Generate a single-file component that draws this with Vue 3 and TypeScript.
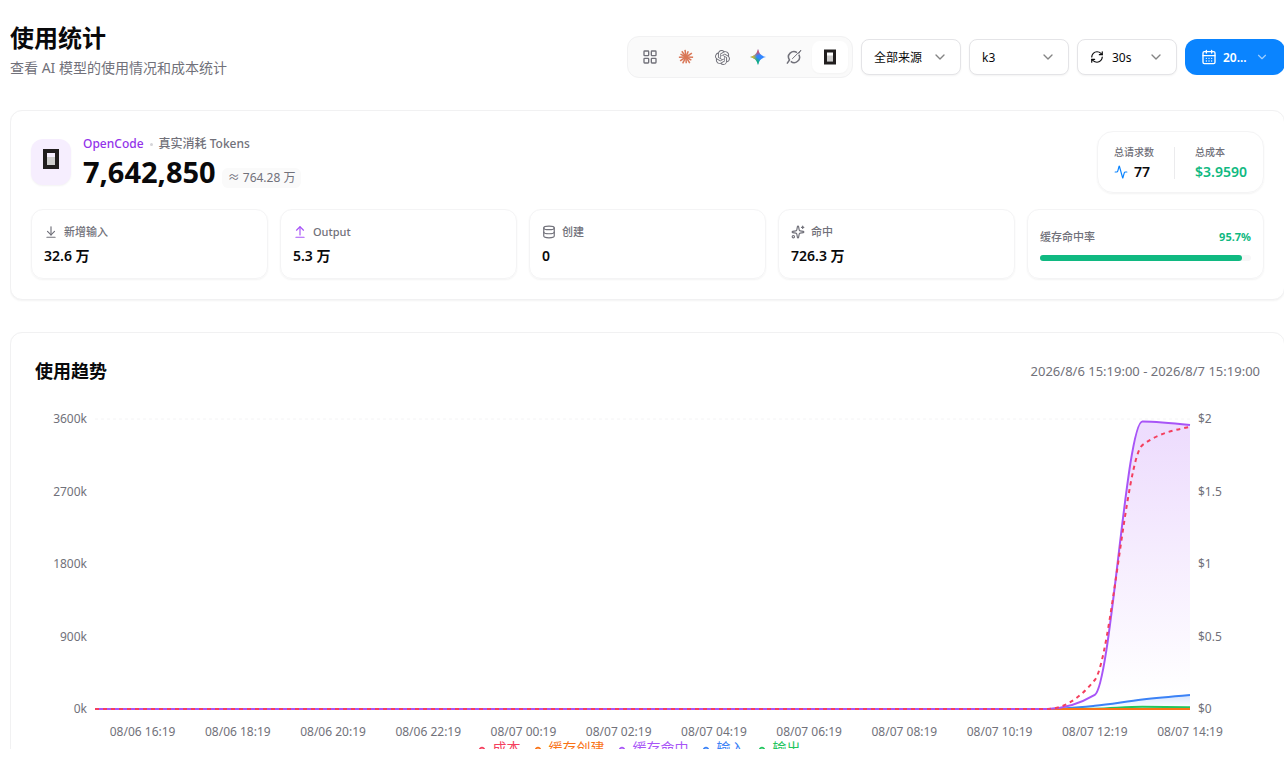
<script setup lang="ts">
import { computed, ref } from 'vue'

interface Point { x: number; y: number }
interface Series { name: string; color: string; values: number[]; key: string }
interface Stat { label: string; value: string; icon: string }

const provider = ref('opencode')
const source = ref('all')
const model = ref('k3')
const interval = ref('30')

const providers = [
  { id: 'all', label: '全部' },
  { id: 'claude', label: 'Claude' },
  { id: 'openai', label: 'OpenAI' },
  { id: 'gemini', label: 'Gemini' },
  { id: 'grok', label: 'Grok' },
  { id: 'opencode', label: 'OpenCode' },
]

const stats: Stat[] = [
  { label: '新增输入', value: '32.6 万', icon: 'down' },
  { label: 'Output', value: '5.3 万', icon: 'up' },
  { label: '创建', value: '0', icon: 'database' },
  { label: '命中', value: '726.3 万', icon: 'sparkles' },
]

const hitRate = 95.7

const plot = { left: 60, right: 1155, top: 10, bottom: 300 }
const tokenMax = 3600
const costMax = 2
const idle = Array<number>(21).fill(0)

const creation: Series = { key: 'creation', name: '缓存创建', color: '#f97316', values: [...idle, 0, 0, 0] }
const hits: Series = { key: 'hits', name: '缓存命中', color: '#a855f7', values: [...idle, 174, 3570, 3525] }
const input: Series = { key: 'input', name: '输入', color: '#3b82f6', values: [...idle, 40, 118, 174] }
const output: Series = { key: 'output', name: '输出', color: '#22c55e', values: [...idle, 4, 27, 22] }
const cost: Series = { key: 'cost', name: '成本', color: '#f43f5e', values: [...idle, 0.2, 1.82, 1.945] }

const areas = [input, output, creation, hits]
const legend = [cost, creation, hits, input, output]

function toPoints(values: number[], max: number): Point[] {
  const step = (plot.right - plot.left) / (values.length - 1)
  return values.map((v, i) => ({
    x: plot.left + i * step,
    y: plot.bottom - (v / max) * (plot.bottom - plot.top),
  }))
}

// Monotone cubic interpolation, so curves never overshoot their samples.
function monotone(p: Point[]): string {
  const n = p.length
  const slope = (i: number) => (p[i + 1].y - p[i].y) / (p[i + 1].x - p[i].x)
  const t: number[] = []
  for (let i = 1; i < n - 1; i++) {
    const a = slope(i - 1)
    const b = slope(i)
    const m = (a + b) / 2
    t[i] = (Math.sign(a) + Math.sign(b)) * Math.min(Math.abs(a), Math.abs(b), 0.5 * Math.abs(m))
  }
  t[0] = (3 * slope(0) - t[1]) / 2
  t[n - 1] = (3 * slope(n - 2) - t[n - 2]) / 2
  let d = `M${p[0].x},${p[0].y}`
  for (let i = 0; i < n - 1; i++) {
    const dx = (p[i + 1].x - p[i].x) / 3
    d += `C${p[i].x + dx},${p[i].y + dx * t[i]},${p[i + 1].x - dx},${p[i + 1].y - dx * t[i + 1]},${p[i + 1].x},${p[i + 1].y}`
  }
  return d
}

const areaPaths = computed(() =>
  areas.map((s) => {
    const line = monotone(toPoints(s.values, tokenMax))
    return { ...s, line, fill: `${line}L${plot.right},${plot.bottom}L${plot.left},${plot.bottom}Z` }
  }),
)
const costPath = computed(() => monotone(toPoints(cost.values, costMax)))

const yTicks = ['3600k', '2700k', '1800k', '900k', '0k'].map((label, i) => ({ label, y: plot.top + i * 72.5 }))
const costTicks = ['$2', '$1.5', '$1', '$0.5', '$0'].map((label, i) => ({ label, y: plot.top + i * 72.5 }))
const xTicks = [
  '08/06 16:19', '08/06 18:19', '08/06 20:19', '08/06 22:19', '08/07 00:19', '08/07 02:19',
  '08/07 04:19', '08/07 06:19', '08/07 08:19', '08/07 10:19', '08/07 12:19', '08/07 14:19',
].map((label, i) => ({ label, x: plot.left + ((2 * i + 1) * (plot.right - plot.left)) / 23 }))

const rays = [
  [2, 8], [31, 7], [58, 8], [88, 7], [118, 8], [146, 8], [178, 8], [207, 7], [234, 8], [262, 8], [291, 7], [326, 8],
].map(([deg, r]) => {
  const a = (deg * Math.PI) / 180
  return { x: 9 + r * Math.cos(a), y: 9 + r * Math.sin(a) }
})
</script>

<template>
  <div class="page">
    <main class="content">
      <header class="top">
        <div class="heading">
          <h1>使用统计</h1>
          <p>查看 AI 模型的使用情况和成本统计</p>
        </div>
        <div class="controls">
          <div class="providers" role="group" aria-label="应用">
            <button
              v-for="p in providers"
              :key="p.id"
              type="button"
              :class="{ active: provider === p.id }"
              :aria-label="p.label"
              :aria-pressed="provider === p.id"
              @click="provider = p.id"
            >
              <svg v-if="p.id === 'all'" width="16" height="16" viewBox="0 0 24 24" fill="none" stroke="#71717a" stroke-width="2">
                <rect x="3" y="3" width="7" height="7" rx="1" /><rect x="14" y="3" width="7" height="7" rx="1" />
                <rect x="3" y="14" width="7" height="7" rx="1" /><rect x="14" y="14" width="7" height="7" rx="1" />
              </svg>
              <svg v-else-if="p.id === 'claude'" width="16" height="16" viewBox="0 0 18 18" stroke="#d97757" stroke-width="1.7">
                <line v-for="(r, i) in rays" :key="i" x1="9" y1="9" :x2="r.x" :y2="r.y" />
              </svg>
              <svg v-else-if="p.id === 'openai'" width="15" height="15" viewBox="0 0 24 24" fill="#71717a">
                <path d="M22.2819 9.8211a5.9847 5.9847 0 0 0-.5157-4.9108 6.0462 6.0462 0 0 0-6.5098-2.9A6.0651 6.0651 0 0 0 4.9807 4.1818a5.9847 5.9847 0 0 0-3.9977 2.9 6.0462 6.0462 0 0 0 .7427 7.0966 5.98 5.98 0 0 0 .511 4.9107 6.051 6.051 0 0 0 6.5146 2.9001A5.9847 5.9847 0 0 0 13.2599 24a6.0557 6.0557 0 0 0 5.7718-4.2058 5.9894 5.9894 0 0 0 3.9977-2.9001 6.0557 6.0557 0 0 0-.7475-7.0729zm-9.022 12.6081a4.4755 4.4755 0 0 1-2.8764-1.0408l.1419-.0804 4.7783-2.7582a.7948.7948 0 0 0 .3927-.6813v-6.7369l2.02 1.1686a.071.071 0 0 1 .038.052v5.5826a4.504 4.504 0 0 1-4.4945 4.4944zm-9.6607-4.1254a4.4708 4.4708 0 0 1-.5346-3.0137l.142.0852 4.783 2.7582a.7712.7712 0 0 0 .7806 0l5.8428-3.3685v2.3324a.0804.0804 0 0 1-.0332.0615L9.74 19.9502a4.4992 4.4992 0 0 1-6.1408-1.6464zM2.3408 7.8956a4.485 4.485 0 0 1 2.3655-1.9728V11.6a.7664.7664 0 0 0 .3879.6765l5.8144 3.3543-2.0201 1.1685a.0757.0757 0 0 1-.071 0l-4.8303-2.7865A4.504 4.504 0 0 1 2.3408 7.872zm16.5963 3.8558L13.1038 8.364 15.1192 7.2a.0757.0757 0 0 1 .071 0l4.8303 2.7913a4.4944 4.4944 0 0 1-.6765 8.1042v-5.6772a.79.79 0 0 0-.407-.667zm2.0107-3.0231l-.142-.0852-4.7735-2.7818a.7759.7759 0 0 0-.7854 0L9.409 9.2297V6.8974a.0662.0662 0 0 1 .0284-.0615l4.8303-2.7866a4.4992 4.4992 0 0 1 6.6802 4.66zM8.3065 12.863l-2.02-1.1638a.0804.0804 0 0 1-.038-.0567V6.0742a4.4992 4.4992 0 0 1 7.3757-3.4537l-.142.0805L8.704 5.459a.7948.7948 0 0 0-.3927.6813zm1.0976-2.3654l2.602-1.4998 2.6069 1.4998v2.9994l-2.5974 1.4997-2.6067-1.4997Z" />
              </svg>
              <svg v-else-if="p.id === 'gemini'" width="16" height="16" viewBox="0 0 24 24">
                <defs>
                  <linearGradient id="gem-red" x1="11" y1="0" x2="13" y2="10" gradientUnits="userSpaceOnUse">
                    <stop offset="0.3" stop-color="#f94543" /><stop offset="1" stop-color="#f94543" stop-opacity="0" />
                  </linearGradient>
                  <linearGradient id="gem-yellow" x1="0" y1="12" x2="11" y2="12" gradientUnits="userSpaceOnUse">
                    <stop offset="0.3" stop-color="#fabc12" /><stop offset="0.95" stop-color="#fabc12" stop-opacity="0" />
                  </linearGradient>
                  <linearGradient id="gem-green" x1="9" y1="22" x2="14" y2="14" gradientUnits="userSpaceOnUse">
                    <stop offset="0.3" stop-color="#08b962" /><stop offset="1" stop-color="#08b962" stop-opacity="0" />
                  </linearGradient>
                </defs>
                <path
                  v-for="f in ['#3186ff', 'url(#gem-green)', 'url(#gem-red)', 'url(#gem-yellow)']"
                  :key="f"
                  :fill="f"
                  d="M12 0C13 6.5 17.5 11 24 12C17.5 13 13 17.5 12 24C11 17.5 6.5 13 0 12C6.5 11 11 6.5 12 0Z"
                />
              </svg>
              <svg v-else-if="p.id === 'grok'" width="16" height="16" viewBox="0 0 16 16" fill="none" stroke="#71717a" stroke-width="1.5">
                <path d="M11 3.7A5.3 5.3 0 0 0 3.5 11L1 14.6" />
                <path d="M4.8 12.3A5.3 5.3 0 0 0 12.8 5.6" />
                <path d="M6.2 9.9L15 1.2L12.6 4.8" stroke-width="1" />
              </svg>
              <svg v-else width="18" height="18" viewBox="0 0 24 24">
                <path fill="#cfcecd" d="M8 10h8v8H8z" />
                <path fill="#211e1e" d="M16 6H8v12h8V6zm4 16H4V2h16v20z" />
              </svg>
            </button>
          </div>

          <label class="select">
            <select v-model="source" aria-label="来源"><option value="all">全部来源</option></select>
            <svg class="chevron" width="16" height="16" viewBox="0 0 24 24"><path d="m6 9 6 6 6-6" /></svg>
          </label>
          <label class="select">
            <select v-model="model" aria-label="模型"><option value="k3">k3</option></select>
            <svg class="chevron" width="16" height="16" viewBox="0 0 24 24"><path d="m6 9 6 6 6-6" /></svg>
          </label>
          <label class="select">
            <svg class="refresh" width="14" height="14" viewBox="0 0 24 24">
              <path d="M3 12a9 9 0 0 1 9-9 9.75 9.75 0 0 1 6.74 2.74L21 8" /><path d="M21 3v5h-5" />
              <path d="M21 12a9 9 0 0 1-9 9 9.75 9.75 0 0 1-6.74-2.74L3 16" /><path d="M8 16H3v5" />
            </svg>
            <select v-model="interval" aria-label="刷新间隔"><option value="30">30s</option></select>
            <svg class="chevron" width="16" height="16" viewBox="0 0 24 24"><path d="m6 9 6 6 6-6" /></svg>
          </label>
          <button type="button" class="date">
            <svg width="16" height="16" viewBox="0 0 24 24">
              <path d="M8 2v4M16 2v4" /><rect x="3" y="4" width="18" height="18" rx="2" /><path d="M3 10h18" />
              <path d="M8 14h.01M12 14h.01M16 14h.01M8 18h.01M12 18h.01M16 18h.01" />
            </svg>
            <span>20...</span>
            <svg class="date-chevron" width="14" height="14" viewBox="0 0 24 24"><path d="m6 9 6 6 6-6" /></svg>
          </button>
        </div>
      </header>

      <section class="card summary">
        <div class="summary-top">
          <div class="hero">
            <div class="hero-icon">
              <svg width="24" height="24" viewBox="0 0 24 24">
                <path fill="#cfcecd" d="M8 10h8v8H8z" />
                <path fill="#211e1e" d="M16 6H8v12h8V6zm4 16H4V2h16v20z" />
              </svg>
            </div>
            <div class="hero-text">
              <div class="hero-label"><span class="app">OpenCode</span><i class="dot"></i><span>真实消耗 Tokens</span></div>
              <div class="hero-value"><strong>7,642,850</strong><span class="approx">≈ 764.28 万</span></div>
            </div>
          </div>
          <div class="totals">
            <div>
              <div class="total-label">总请求数</div>
              <div class="total-value">
                <svg width="14" height="14" viewBox="0 0 24 24" fill="none" stroke="#0a84ff" stroke-width="2" stroke-linecap="round" stroke-linejoin="round">
                  <path d="M22 12h-2.48a2 2 0 0 0-1.93 1.46l-2.35 8.36a.25.25 0 0 1-.48 0L9.24 2.18a.25.25 0 0 0-.48 0l-2.35 8.36A2 2 0 0 1 4.49 12H2" />
                </svg>
                <span>77</span>
              </div>
            </div>
            <div class="divider"></div>
            <div>
              <div class="total-label">总成本</div>
              <div class="total-value green">$3.9590</div>
            </div>
          </div>
        </div>

        <div class="stats">
          <div v-for="s in stats" :key="s.label" class="stat">
            <div class="stat-label">
              <svg width="14" height="14" viewBox="0 0 24 24" :class="['line-icon', s.icon]">
                <template v-if="s.icon === 'down'"><path d="M12 17V3" /><path d="m6 11 6 6 6-6" /><path d="M19 21H5" /></template>
                <template v-else-if="s.icon === 'up'"><path d="m18 9-6-6-6 6" /><path d="M12 3v14" /><path d="M5 21h14" /></template>
                <template v-else-if="s.icon === 'database'">
                  <ellipse cx="12" cy="5" rx="9" ry="3" /><path d="M3 5v14a9 3 0 0 0 18 0V5" /><path d="M3 12a9 3 0 0 0 18 0" />
                </template>
                <template v-else>
                  <path d="M11.017 2.814a1 1 0 0 1 1.966 0l1.051 5.558a2 2 0 0 0 1.594 1.594l5.558 1.051a1 1 0 0 1 0 1.966l-5.558 1.051a2 2 0 0 0-1.594 1.594l-1.051 5.558a1 1 0 0 1-1.966 0l-1.051-5.558a2 2 0 0 0-1.594-1.594l-5.558-1.051a1 1 0 0 1 0-1.966l5.558-1.051a2 2 0 0 0 1.594-1.594z" />
                  <path d="M20 2v4" /><path d="M22 4h-4" /><circle cx="4" cy="20" r="2" />
                </template>
              </svg>
              <span>{{ s.label }}</span>
            </div>
            <div class="stat-value">{{ s.value }}</div>
          </div>
          <div class="stat rate">
            <div class="rate-head"><span>缓存命中率</span><strong>{{ hitRate }}%</strong></div>
            <div class="track"><div class="fill" :style="{ width: hitRate + '%' }"></div></div>
          </div>
        </div>
      </section>

      <section class="card trend">
        <div class="trend-head">
          <h2>使用趋势</h2>
          <span>2026/8/6 15:19:00 - 2026/8/7 15:19:00</span>
        </div>
        <svg class="chart" viewBox="0 0 1225 329" role="img" aria-label="使用趋势">
          <defs>
            <linearGradient v-for="s in areas" :id="'fill-' + s.key" :key="s.key" x1="0" y1="0" x2="0" y2="1">
              <stop offset="5%" :stop-color="s.color" stop-opacity="0.2" />
              <stop offset="95%" :stop-color="s.color" stop-opacity="0" />
            </linearGradient>
          </defs>
          <line class="grid" :x1="plot.left" :x2="plot.right" :y1="plot.top" :y2="plot.top" />
          <text v-for="t in yTicks" :key="t.label" x="52" :y="t.y + 4" text-anchor="end">{{ t.label }}</text>
          <text v-for="t in costTicks" :key="t.label" x="1163" :y="t.y + 4">{{ t.label }}</text>
          <text v-for="t in xTicks" :key="t.label" :x="t.x" y="327" text-anchor="middle">{{ t.label }}</text>
          <g v-for="a in areaPaths" :key="a.key">
            <path :d="a.fill" :fill="`url(#fill-${a.key})`" />
            <path :d="a.line" fill="none" :stroke="a.color" stroke-width="2" />
          </g>
          <path :d="costPath" fill="none" :stroke="cost.color" stroke-width="2" stroke-dasharray="4 4" />
        </svg>
        <ul class="legend">
          <li v-for="s in legend" :key="s.key" :style="{ color: s.color }">
            <svg width="14" height="14" viewBox="0 0 32 32" fill="none" stroke="currentColor" stroke-width="4">
              <path d="M0,16h10.7A5.3,5.3,0,1,1,21.3,16H32M21.3,16A5.3,5.3,0,1,1,10.7,16" />
            </svg>
            <span>{{ s.name }}</span>
          </li>
        </ul>
      </section>
    </main>
  </div>
</template>

<style>
body {
  margin: 0;
  background: #fff;
}
</style>

<style scoped>
.page {
  box-sizing: border-box;
  height: 100vh;
  padding: 0 0 12px 10px;
  overflow: hidden;
  color: #09090b;
  font-family: "Noto Sans", "Noto Sans CJK SC", sans-serif;
  font-size: 14px;
}
.page *,
.page *::before {
  box-sizing: border-box;
}
svg {
  display: block;
  flex-shrink: 0;
}
button,
select {
  font: inherit;
  color: inherit;
}
.content {
  display: flex;
  flex-direction: column;
  gap: 32px;
  height: 100%;
  margin-right: -1px;
  padding-top: 22px;
  overflow: hidden;
}
.content > * {
  flex-shrink: 0;
}
.top {
  display: flex;
  justify-content: space-between;
  align-items: flex-end;
}
.heading {
  display: flex;
  flex-direction: column;
  gap: 4px;
}
h1,
h2,
p {
  margin: 0;
}
h1 {
  font-size: 24px;
  line-height: 32px;
  font-weight: 700;
}
.heading p {
  color: #71717a;
  font-size: 14px;
  line-height: 20px;
}
.controls {
  display: flex;
  align-items: center;
  gap: 8px;
}
.providers {
  display: flex;
  padding: 4px;
  border: 1px solid #f1f1f2;
  border-radius: 12px;
  background: #fafafa;
}
.providers button {
  display: flex;
  align-items: center;
  justify-content: center;
  width: 36px;
  height: 32px;
  padding: 0;
  border: 0;
  border-radius: 8px;
  background: none;
}
.providers .active {
  background: #fff;
  box-shadow: 0 1px 2px rgba(0, 0, 0, 0.03);
}
.select {
  display: flex;
  align-items: center;
  gap: 8px;
  width: 100px;
  height: 36px;
  padding: 0 12px;
  border: 1px solid #e4e4e7;
  border-radius: 8px;
  background: #fff;
  box-shadow: 0 1px 2px rgba(0, 0, 0, 0.05);
  font-size: 12px;
}
.select select {
  flex: 1;
  min-width: 0;
  padding: 0;
  border: 0;
  appearance: none;
  background: none;
  outline: none;
}
.chevron {
  margin-left: -8px;
  fill: none;
  stroke: #848484;
  stroke-width: 2;
  stroke-linecap: round;
  stroke-linejoin: round;
}
.refresh {
  fill: none;
  stroke: #09090b;
  stroke-width: 2;
  stroke-linecap: round;
  stroke-linejoin: round;
}
.date {
  display: flex;
  align-items: center;
  gap: 6px;
  width: 100px;
  height: 36px;
  padding: 0 16px;
  border: 0;
  border-radius: 12px;
  background: #0a84ff;
  color: #fff;
  font-size: 12px;
  font-weight: 600;
}
.date svg {
  fill: none;
  stroke: #fff;
  stroke-width: 2;
  stroke-linecap: round;
  stroke-linejoin: round;
}
.date .date-chevron {
  margin-left: auto;
  opacity: 0.6;
}
.card {
  border: 1px solid #f1f1f2;
  border-radius: 12px;
  background: #fff;
  box-shadow: 0 1px 2px rgba(0, 0, 0, 0.05);
}
.summary {
  display: flex;
  flex-direction: column;
  gap: 16px;
  padding: 20px;
}
.summary-top {
  display: flex;
  justify-content: space-between;
  align-items: center;
}
.hero {
  display: flex;
  align-items: center;
  gap: 12px;
}
.hero-icon {
  padding: 8px 8px 14px;
  border-radius: 12px;
  background: #f6eefe;
  box-shadow: 0 1px 2px rgba(0, 0, 0, 0.05);
}
.hero-text {
  padding-top: 4px;
}
.hero-label {
  display: flex;
  align-items: center;
  gap: 6px;
  color: #71717a;
  font-size: 12px;
  line-height: 16px;
  font-weight: 500;
}
.app {
  color: #9333ea;
}
.dot {
  width: 3px;
  height: 3px;
  border-radius: 50%;
  background: #d4d4d8;
}
.hero-value {
  display: flex;
  align-items: flex-end;
  gap: 6px;
}
.hero-value strong {
  font-size: 29px;
  line-height: 40px;
  font-weight: 700;
}
.approx {
  margin-bottom: 4px;
  padding: 2px 6px;
  border-radius: 6px;
  background: #fafafa;
  color: #71717a;
  font-size: 12px;
  line-height: 16px;
  font-weight: 400;
}
.totals {
  display: flex;
  align-items: center;
  gap: 20px;
  padding: 12px 16px 10px;
  border: 1px solid #f4f4f5;
  border-radius: 16px;
  box-shadow: 0 1px 2px rgba(0, 0, 0, 0.05);
}
.total-label {
  margin-bottom: 2px;
  color: #71717a;
  font-size: 10px;
  line-height: 16px;
  font-weight: 500;
}
.total-value {
  display: flex;
  align-items: center;
  gap: 6px;
  font-size: 14px;
  line-height: 20px;
  font-weight: 600;
}
.green {
  color: #10b981;
}
.divider {
  width: 1px;
  height: 32px;
  background: #ebebed;
}
.stats {
  display: grid;
  grid-template-columns: repeat(5, 1fr);
  gap: 12px;
}
.stat {
  display: flex;
  flex-direction: column;
  justify-content: center;
  gap: 6px;
  padding: 14px 12px 12px;
  border: 1px solid #f4f4f5;
  border-radius: 12px;
  box-shadow: 0 1px 2px rgba(0, 0, 0, 0.05);
}
.stat-label {
  display: flex;
  align-items: center;
  gap: 6px;
  color: #71717a;
  font-size: 11px;
  line-height: 16px;
  font-weight: 500;
}
.line-icon {
  fill: none;
  stroke: #71717a;
  stroke-width: 2;
  stroke-linecap: round;
  stroke-linejoin: round;
}
.line-icon.up {
  stroke: #a855f7;
}
.stat-value {
  font-size: 14px;
  line-height: 20px;
  font-weight: 600;
}
.rate {
  gap: 10px;
}
.rate-head {
  display: flex;
  justify-content: space-between;
  color: #71717a;
  font-size: 11px;
  line-height: 16px;
  font-weight: 500;
}
.rate-head strong {
  color: #10b981;
  font-weight: 700;
}
.track {
  height: 6px;
  border-radius: 3px;
  background: #f7f7f8;
}
.fill {
  height: 100%;
  border-radius: 3px;
  background: #10b981;
}
.trend {
  padding: 24px;
}
.trend-head {
  display: flex;
  justify-content: space-between;
  align-items: center;
  margin-bottom: 24px;
  line-height: 28px;
}
h2 {
  font-size: 18px;
  font-weight: 600;
}
.trend-head span {
  color: #71717a;
  font-size: 13px;
}
.chart {
  width: 100%;
  overflow: visible;
}
.chart text {
  fill: #71717a;
  font-size: 12px;
}
.grid {
  stroke: #f4f4f5;
  stroke-dasharray: 3 3;
}
.legend {
  display: flex;
  justify-content: center;
  margin: 0;
  padding: 0 10px 0 0;
  list-style: none;
  font-size: 14px;
  line-height: 20px;
}
.legend li {
  display: flex;
  align-items: center;
  gap: 4px;
  margin-right: 10px;
}
.legend svg {
  margin-top: 4px;
}
</style>
